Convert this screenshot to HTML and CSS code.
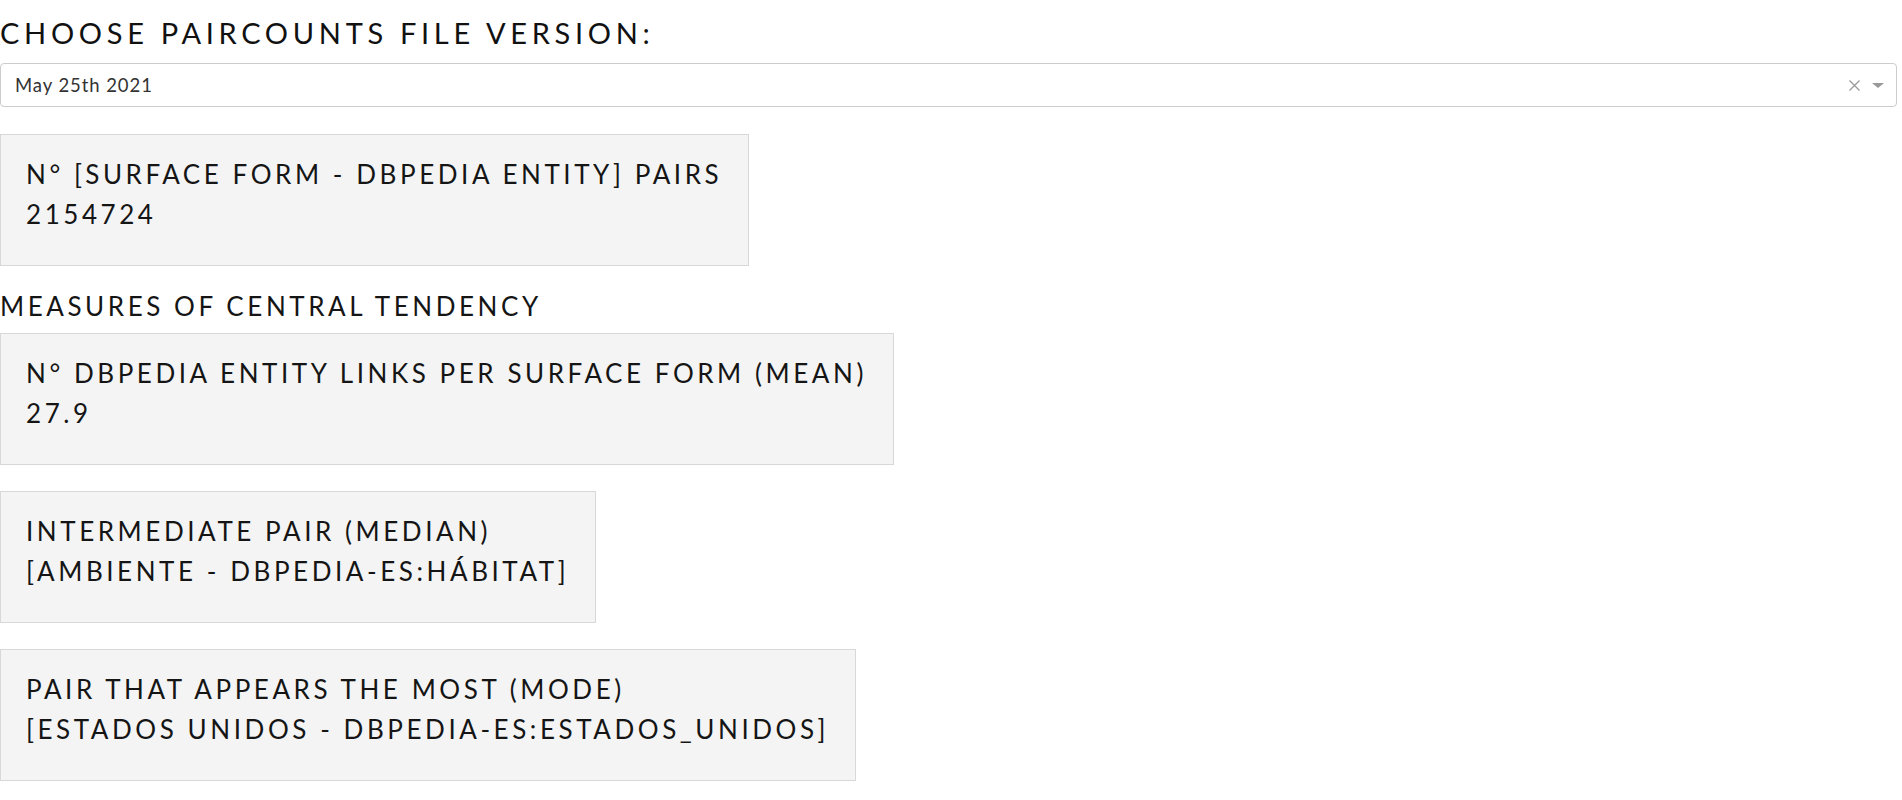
FILE: index.html
```html
<!DOCTYPE html>
<html lang="en">
<head>
<meta charset="utf-8">
<title>Paircounts</title>
<link rel="stylesheet" href="styles.css">
</head>
<body>
<div class="page">
  <header class="top">
    <h1 class="title">CHOOSE PAIRCOUNTS FILE VERSION:</h1>
    <div class="select">
      <span class="select-value">May 25th 2021</span>
      <span class="select-clear">
        <svg width="11" height="11" viewBox="0 0 11 11"><path d="M0.5 0.5 L10.5 10.5 M10.5 0.5 L0.5 10.5" stroke="#9a9a9a" stroke-width="1.3" fill="none"/></svg>
      </span>
      <span class="select-arrow"></span>
    </div>
  </header>
  <main class="scroll">
    <div class="content">
      <section class="card">
        <p class="card-label">N° [SURFACE FORM - DBPEDIA ENTITY] PAIRS</p>
        <p class="card-value">2154724</p>
      </section>
      <h2 class="section-title">MEASURES OF CENTRAL TENDENCY</h2>
      <section class="card">
        <p class="card-label">N° DBPEDIA ENTITY LINKS PER SURFACE FORM (MEAN)</p>
        <p class="card-value">27.9</p>
      </section>
      <section class="card">
        <p class="card-label">INTERMEDIATE PAIR (MEDIAN)</p>
        <p class="card-value">[AMBIENTE - DBPEDIA-ES:HÁBITAT]</p>
      </section>
      <section class="card">
        <p class="card-label">PAIR THAT APPEARS THE MOST (MODE)</p>
        <p class="card-value">[ESTADOS UNIDOS - DBPEDIA-ES:ESTADOS_UNIDOS]</p>
      </section>
    </div>
  </main>
</div>
</body>
</html>
```

FILE: styles.css
```css
html, body {
  margin: 0;
  padding: 0;
  height: 100%;
}
body {
  font-family: "Lato", "Noto Sans", sans-serif;
  color: #151515;
  background: #ffffff;
  overflow: hidden;
}
.page {
  height: 100vh;
  display: flex;
  flex-direction: column;
}
.top {
  padding-right: 5px;
  flex: none;
}
.title {
  margin: 0;
  padding-top: 15px;
  font-size: 29px;
  line-height: 36px;
  font-weight: 400;
  letter-spacing: 0.162em;
  color: #111111;
}
.select {
  margin-top: 12px;
  height: 42px;
  border: 1px solid #cccccc;
  border-radius: 4px;
  display: flex;
  align-items: center;
  padding: 0 12px 0 14px;
}
.select-value {
  flex: 1;
  font-size: 18.5px;
  letter-spacing: 0.05em;
  color: #333333;
}
.select-clear {
  display: flex;
  width: 11px;
  height: 11px;
  margin-right: 12px;
}
.select-arrow {
  width: 0;
  height: 0;
  border-left: 6px solid transparent;
  border-right: 6px solid transparent;
  border-top: 5px solid #999999;
}
.scroll {
  flex: 1;
  overflow-y: scroll;
  margin-top: 1px;
}
.scroll::-webkit-scrollbar {
  width: 4px;
}
.scroll::-webkit-scrollbar-track {
  background: #f1f1f1;
}
.scroll::-webkit-scrollbar-thumb {
  background: #c1c1c1;
  border-left: 1px solid #f1f1f1;
}
.content {
  min-height: 1140px;
  padding-top: 26px;
  display: flex;
  flex-direction: column;
  align-items: flex-start;
}
.card {
  background: #f4f4f4;
  border: 1px solid #d8d8d8;
  padding: 19px 26px 31px 25px;
  margin-bottom: 26px;
}
.card-label, .card-value {
  margin: 0;
  font-size: 26px;
  line-height: 40px;
  letter-spacing: 0.137em;
  white-space: nowrap;
}
.section-title {
  margin: -6px 0 7px 0;
  font-size: 26px;
  line-height: 40px;
  font-weight: 400;
  letter-spacing: 0.137em;
}
```
